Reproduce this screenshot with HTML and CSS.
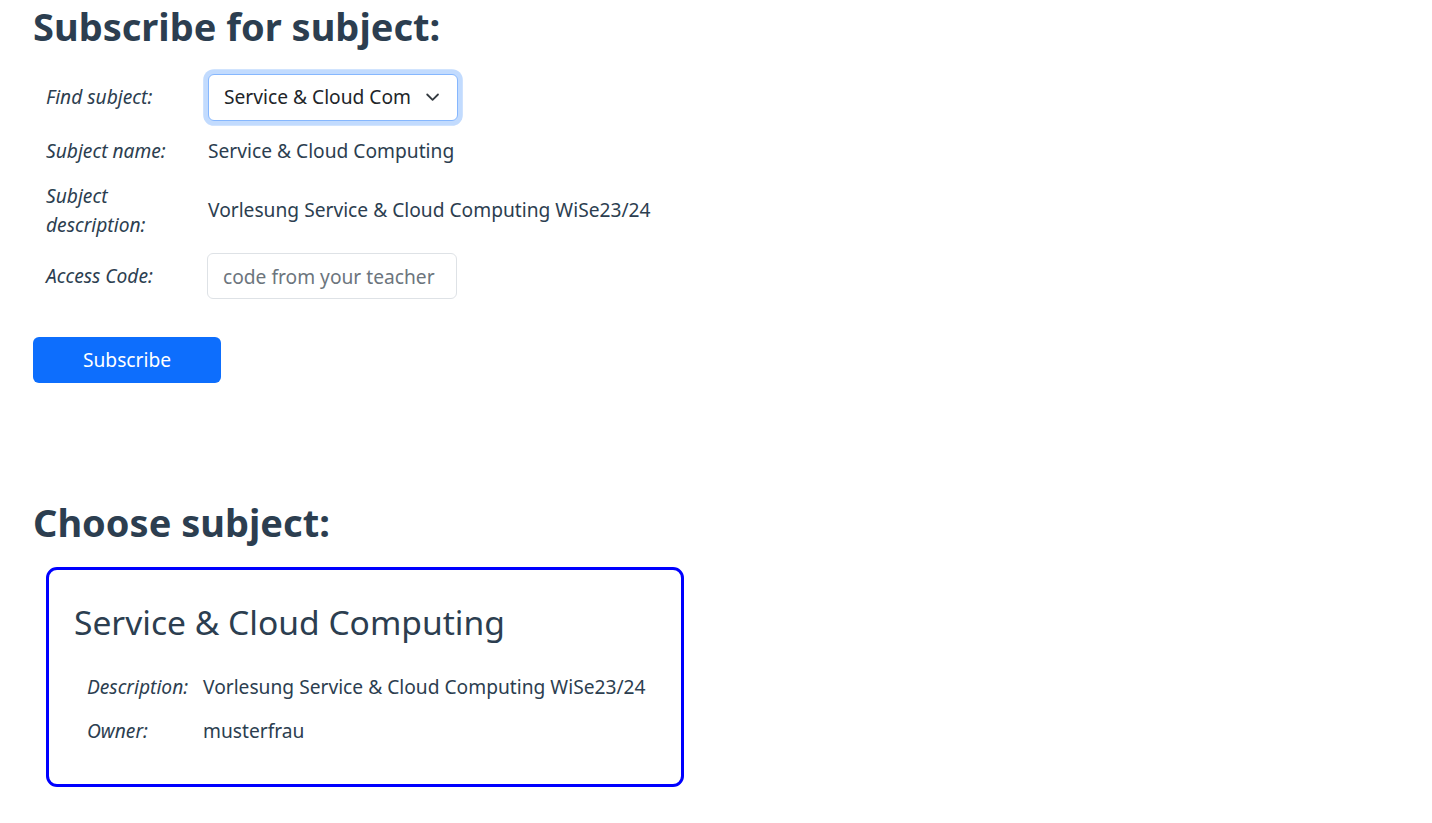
FILE: index.html
```html
<!DOCTYPE html>
<html lang="en">
<head>
<meta charset="utf-8">
<title>Subscribe for subject</title>
<link rel="stylesheet" href="styles.css">
</head>
<body>
<main class="page">
  <h2 class="title">Subscribe for subject:</h2>
  <div class="form-grid">
    <span class="lbl">Find subject:</span>
    <div class="val">
      <div class="select">
        <span class="select-text">Service &amp; Cloud Com</span>
        <svg class="chevron" viewBox="0 0 16 16" width="19.2" height="14.4"><path d="m2 5 6 6 6-6" fill="none" stroke="#343a40" stroke-width="2" stroke-linecap="round" stroke-linejoin="round"/></svg>
      </div>
    </div>
    <span class="lbl">Subject name:</span>
    <span class="val">Service &amp; Cloud Computing</span>
    <span class="lbl">Subject description:</span>
    <span class="val">Vorlesung Service &amp; Cloud Computing WiSe23/24</span>
    <span class="lbl row-last">Access Code:</span>
    <div class="val row-last"><input class="input" type="text" placeholder="code from your teacher"></div>
  </div>
  <button class="btn" type="button">Subscribe</button>

  <h2 class="title title-choose">Choose subject:</h2>
  <div class="card">
    <h3 class="card-title">Service &amp; Cloud Computing</h3>
    <div class="card-grid">
      <span class="lbl">Description:</span>
      <span class="val">Vorlesung Service &amp; Cloud Computing WiSe23/24</span>
      <span class="lbl">Owner:</span>
      <span class="val">musterfrau</span>
    </div>
  </div>
</main>
</body>
</html>
```
FILE: styles.css
```css
html, body {
  margin: 0;
  padding: 0;
  background: #ffffff;
}

body {
  font-family: "Noto Sans", "Open Sans", sans-serif;
  font-size: 19.2px;
  line-height: 1.5;
  color: #2c3e50;
}

.page {
  padding: 0 0 30px 33px;
}

.title {
  margin: 0;
  font-size: 38px;
  font-weight: 700;
  line-height: 52px;
  color: #2c3e50;
}

.form-grid {
  display: grid;
  grid-template-columns: 150px auto;
  column-gap: 12px;
  row-gap: 16px;
  align-items: center;
  justify-content: start;
  margin: 22px 0 0 13px;
}

.row-last {
  margin-top: -2px;
}

.lbl {
  font-style: italic;
  color: #2c3e50;
}

.val {
  white-space: nowrap;
}

.select {
  box-sizing: border-box;
  width: 250px;
  height: 47px;
  display: flex;
  align-items: center;
  padding: 0 14.4px 0 15px;
  border: 1px solid #86b7fe;
  border-radius: 6px;
  box-shadow: 0 0 0 4.8px rgba(13, 110, 253, 0.25);
  background: #fff;
  color: #212529;
}

.select-text {
  flex: 1;
  white-space: nowrap;
}

.chevron {
  flex: none;
  margin-left: 8px;
}

.input {
  box-sizing: border-box;
  width: 250px;
  height: 46px;
  margin-left: -1px;
  padding: 0 15px;
  border: 1px solid #dee2e6;
  border-radius: 6px;
  font-family: inherit;
  font-size: 19.2px;
  color: #212529;
  outline: none;
}

.input::placeholder {
  color: #6c757d;
  opacity: 1;
}

.btn {
  display: block;
  width: 188px;
  height: 46px;
  margin: 38px 0 0 0;
  padding: 0;
  border: none;
  border-radius: 6px;
  background: #0d6efd;
  color: #ffffff;
  font-family: inherit;
  font-size: 19.2px;
  line-height: 1.5;
  cursor: pointer;
}

.title-choose {
  margin-top: 113px;
}

.card {
  box-sizing: border-box;
  width: 638px;
  margin: 19px 0 0 13px;
  padding: 32px 20px 38.6px 25px;
  border: 3px solid #0000ff;
  border-radius: 11px;
}

.card-title {
  margin: 0 0 30.3px 0;
  font-size: 33.6px;
  font-weight: 400;
  line-height: 1.2;
  color: #2c3e50;
}

.card-grid {
  display: grid;
  grid-template-columns: 116px auto;
  row-gap: 15.2px;
  justify-content: start;
  margin-left: 13px;
}
```
